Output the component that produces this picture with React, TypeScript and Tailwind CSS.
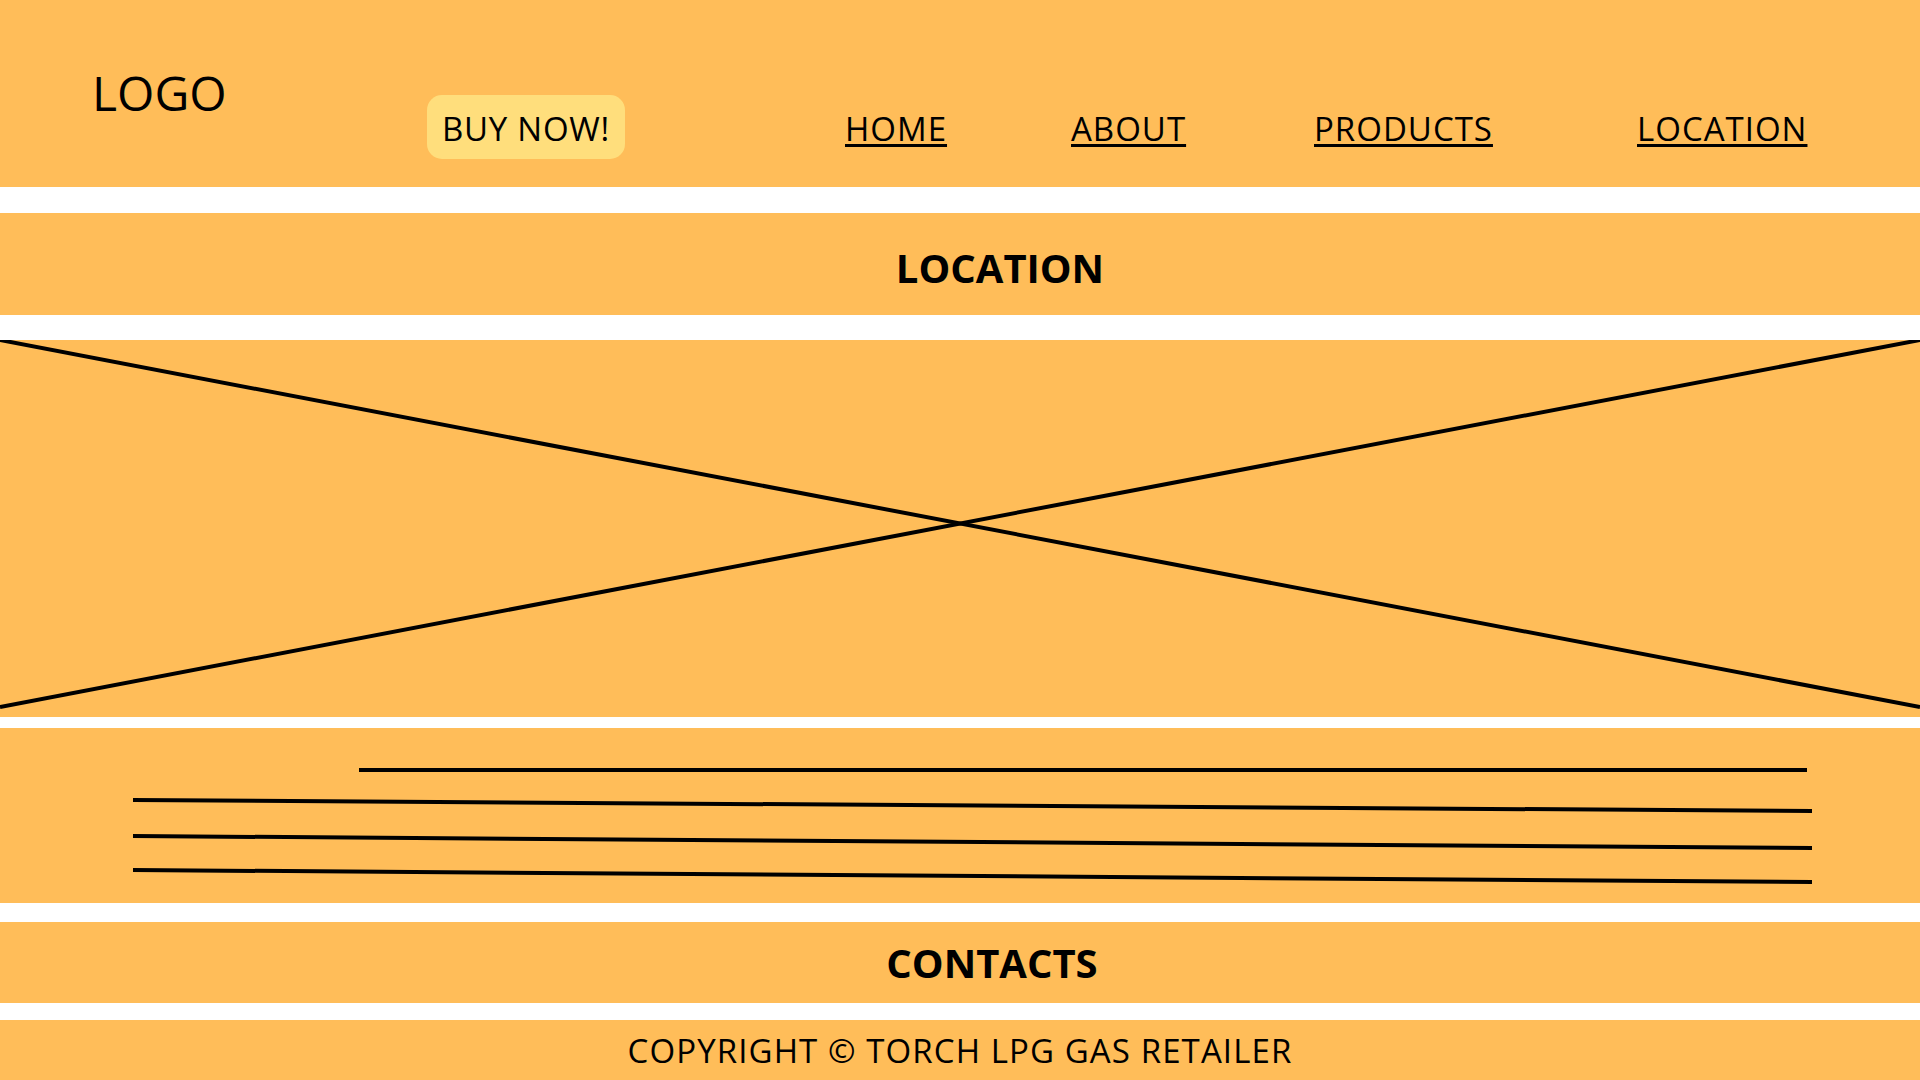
import React from "react";

export default function App() {
  const nav = [
    { label: "HOME", w: "w-[226px]" },
    { label: "ABOUT", w: "w-[243px]" },
    { label: "PRODUCTS", w: "w-[323px]" },
    { label: "LOCATION", w: "w-[283px]" },
  ];

  return (
    <div className="w-full h-[1080px] bg-white flex flex-col text-black font-['Open_Sans',sans-serif] overflow-hidden">
      {/* Header */}
      <header className="h-[187px] bg-[#FFBD59] flex items-start pl-[92px]">
        <div className="w-[335px] mt-[69px] text-[48px] leading-none">LOGO</div>
        <button className="w-[198px] h-[64px] mt-[95px] bg-[#FFDE7C] rounded-[15px] flex items-center justify-center pt-[2px] text-[33px] leading-none tracking-[0.75px]">
          BUY NOW!
        </button>
        <nav className="flex ml-[220px] mt-[112px]">
          {nav.map((item) => (
            <a
              key={item.label}
              className={`${item.w} text-[33px] leading-none tracking-[1px] underline decoration-[3px] underline-offset-[3px]`}
            >
              {item.label}
            </a>
          ))}
        </nav>
      </header>

      {/* Location title */}
      <section className="mt-[26px] h-[102px] bg-[#FFBD59] flex items-center justify-center pl-[80px] pt-[8px]">
        <h2 className="text-[40px] leading-none font-bold">LOCATION</h2>
      </section>

      {/* Map placeholder */}
      <section className="mt-[25px] h-[377px] bg-[#FFBD59]">
        <svg width="1920" height="377" viewBox="0 0 1920 377" className="block">
          <line x1="0" y1="0" x2="1920" y2="367" stroke="#000" strokeWidth="4" />
          <line x1="0" y1="367" x2="1920" y2="0" stroke="#000" strokeWidth="4" />
        </svg>
      </section>

      {/* Text placeholder */}
      <section className="mt-[11px] h-[175px] bg-[#FFBD59]">
        <svg width="1920" height="175" viewBox="0 0 1920 175" className="block">
          <line x1="359" y1="42" x2="1807" y2="42" stroke="#000" strokeWidth="4" />
          <line x1="133" y1="72" x2="1812" y2="83" stroke="#000" strokeWidth="4" />
          <line x1="133" y1="108" x2="1812" y2="120" stroke="#000" strokeWidth="4" />
          <line x1="133" y1="142" x2="1812" y2="154" stroke="#000" strokeWidth="4" />
        </svg>
      </section>

      {/* Contacts */}
      <section className="mt-[19px] h-[81px] bg-[#FFBD59] flex items-center justify-center pl-[64px]">
        <h2 className="text-[40px] leading-none font-bold">CONTACTS</h2>
      </section>

      {/* Footer */}
      <footer className="mt-[17px] h-[60px] bg-[#FFBD59] flex items-center justify-center">
        <p className="text-[33px] leading-none tracking-[1.1px]">COPYRIGHT © TORCH LPG GAS RETAILER</p>
      </footer>
    </div>
  );
}
